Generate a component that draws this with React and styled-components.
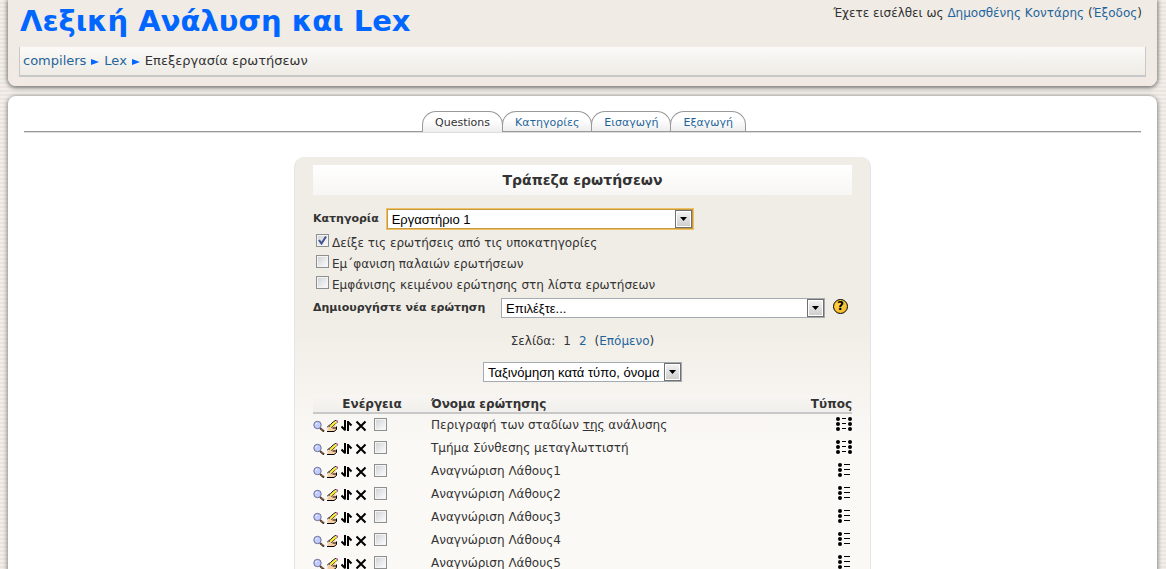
import styled, { createGlobalStyle } from 'styled-components';

const GlobalStyle = createGlobalStyle`
  * { box-sizing: border-box; }

  html { overflow: hidden; }

  body {
    margin: 0;
    background: repeating-linear-gradient(#f3eee9 0 2px, #eae5df 2px 4px);
    color: #333;
    font-family: 'DejaVu Sans', Verdana, sans-serif;
    font-size: 12px;
    line-height: 16px;
  }

  a {
    color: #1f659b;
    text-decoration: none;
  }
`;

const Page = styled.div`
  display: flex;
  flex-direction: column;
  gap: 10px;
  padding: 0 9px 0 8px;
`;

const Header = styled.header`
  padding: 0 11px 9px;
  background: linear-gradient(#f0ebe5 60%, #f2e9e3);
  border-radius: 0 0 8px 8px;
  box-shadow: 0 1px 4px 1px #777;
`;

const HeaderTop = styled.div`
  display: flex;
  justify-content: space-between;
  align-items: flex-start;
  height: 47px;
  padding: 4px 4px 0 1px;
`;

const SiteTitle = styled.h1`
  margin: 0;
  color: #06f;
  font-size: 29px;
  line-height: 34px;
`;

const LoginInfo = styled.div`
  line-height: 18px;
`;

const Breadcrumb = styled.nav`
  display: flex;
  align-items: center;
  gap: 5px;
  height: 30px;
  padding: 0 3px;
  background: linear-gradient(#fbfaf8, #eeebe5);
  border: solid #c8c8c8;
  border-width: 0 1px 2px;
  font-size: 13px;
`;

const ArrowIcon = styled.svg`
  width: 8px;
  height: 8px;
  fill: #06f;
`;

const Content = styled.main`
  padding: 15px 16px 0;
  background: #fff;
  border-radius: 8px 8px 0 0;
  box-shadow: 0 1px 4px 1px #888;
`;

const Tabs = styled.nav`
  display: flex;
  justify-content: center;
  padding-left: 4px;
  border-bottom: 1px solid #999;
  box-shadow: 0 1px #ddd;
`;

const Tab = styled.a`
  height: ${({ $active }) => ($active ? '21px' : '20px')};
  margin-bottom: ${({ $active }) => ($active ? '-1px' : '0')};
  margin-left: -1px;
  padding: 0 12px;
  background: linear-gradient(#fff 40%, #eee);
  border: 1px solid #999;
  border-bottom: 0;
  border-radius: 14px 14px 0 0;
  color: ${({ $active }) => ($active ? '#333' : '#1f659b')};
  font-size: 11px;
  line-height: 22px;
`;

const Bank = styled.section`
  width: 577px;
  margin: 25px auto 0;
  padding: 8px 18px;
  background: linear-gradient(#f0ede6 0 160px, #fbf9f6 290px, #fbf9f5);
  border: solid #e5e5e5;
  border-width: 0 1px;
  border-radius: 10px 10px 0 0;
`;

const BankTitle = styled.h2`
  margin: 0 0 14px;
  background: linear-gradient(#fff, #f7f6f4);
  font-size: 14px;
  line-height: 30px;
  text-align: center;
`;

const Field = styled.div`
  display: flex;
  align-items: center;
  gap: 8px;
`;

const CreateField = styled(Field)`
  margin-top: 3px;
  padding-right: 4px;

  label { flex: 1; }
`;

const FieldLabel = styled.label`
  font-size: 11px;
  font-weight: bold;
  line-height: 18px;
  white-space: nowrap;
`;

const SelectBox = styled.div`
  position: relative;
  display: flex;
  flex: ${({ $width }) => ($width ? `0 0 ${$width}px` : '0 0 auto')};
  outline: ${({ $focus }) => ($focus ? '1px solid #f2c063' : '0')};
`;

const Select = styled.select`
  appearance: none;
  width: 100%;
  height: 20px;
  padding: 0 21px 0 4px;
  background: #fff;
  border: 1px solid ${({ $focus }) => ($focus ? '#c59a45' : '#a5a9b0')};
  border-radius: 0;
  outline: 0;
  color: #000;
  font: 13px 'Liberation Sans', Arial, sans-serif;
`;

const SelectArrow = styled.span`
  position: absolute;
  top: 1px;
  right: 1px;
  display: flex;
  align-items: center;
  justify-content: center;
  width: 17px;
  height: 18px;
  background: linear-gradient(#f4f4f4, #ccc);
  border: 1px solid #707070;
  box-shadow: inset 0 0 0 1px #fff;
  pointer-events: none;
`;

const CheckList = styled.div`
  margin-top: 3px;
  margin-bottom: 2px;
`;

const CheckLabel = styled.label`
  display: flex;
  align-items: center;
  gap: 3px;
  height: 21px;
  padding-left: 3px;

  input { margin-bottom: 4px; }
`;

const Checkbox = styled.input`
  appearance: none;
  width: 13px;
  height: 13px;
  margin: 0;
  background: linear-gradient(135deg, #cdd0d4, #fff);
  border: 1px solid #8e8f8f;
  box-shadow: inset 0 0 0 1px #f4f4f4;

  &:checked {
    background: url("data:image/svg+xml,%3Csvg xmlns='http://www.w3.org/2000/svg' viewBox='0 0 11 11'%3E%3Cpath d='M2 5l2.5 3.500L9 1.500' fill='none' stroke='%23405090' stroke-width='2'/%3E%3C/svg%3E"), linear-gradient(135deg, #cdd0d4, #fff);
  }
`;

const HelpButton = styled.button`
  width: 15px;
  height: 15px;
  margin-bottom: 3px;
  padding: 0;
  background: radial-gradient(circle at 40% 40%, #ffd84a, #f5ae1b);
  border: 1px solid #000;
  border-radius: 50%;
  color: #000;
  font: bold 12px/13px 'DejaVu Sans', sans-serif;
  text-align: center;
`;

const Paging = styled.nav`
  display: flex;
  justify-content: center;
  gap: 8px;
  margin: 15px 0 13px;
`;

const SortRow = styled.div`
  display: flex;
  justify-content: center;
  margin-bottom: 13px;
`;

const Table = styled.table`
  width: 100%;
  border-collapse: collapse;
  table-layout: fixed;
`;

const HeadCell = styled.th`
  width: ${({ $width }) => $width || 'auto'};
  height: 18px;
  padding: 0;
  background: linear-gradient(#f8f6f3, #f1efeb);
  border-bottom: 2px solid #c8c8c8;
  text-align: ${({ $align }) => $align || 'left'};
`;

const Cell = styled.td`
  height: 23px;
  padding: 0;
`;

const Actions = styled.div`
  display: flex;
  align-items: center;
  gap: 2px;

  input { margin: 0 0 1px 5px; }
`;

const IconButton = styled.button`
  display: flex;
  padding: 2px 0 0;
  background: none;
  border: 0;
`;

const TypeIcon = styled.svg`
  display: block;
  width: 16px;
  height: 16px;
  margin: 0 0 2px auto;
`;

const tabs = ['Questions', 'Κατηγορίες', 'Εισαγωγή', 'Εξαγωγή'];

const questions = [
  { id: 1, name: <>Περιγραφή των σταδίων <u>της</u> ανάλυσης</>, type: 'match' },
  { id: 2, name: 'Τμήμα Σύνθεσης μεταγλωττιστή', type: 'match' },
  { id: 3, name: 'Αναγνώριση Λάθους1', type: 'choice' },
  { id: 4, name: 'Αναγνώριση Λάθους2', type: 'choice' },
  { id: 5, name: 'Αναγνώριση Λάθους3', type: 'choice' },
  { id: 6, name: 'Αναγνώριση Λάθους4', type: 'choice' },
  { id: 7, name: 'Αναγνώριση Λάθους5', type: 'choice' },
];

const Arrow = () => (
  <ArrowIcon viewBox="0 0 8 8"><path d="M0 2l8 3-8 3z" /></ArrowIcon>
);

const PreviewIcon = () => (
  <svg width="12" height="12" viewBox="0 0 12 12">
    <path d="M7 8l4 3.500" stroke="#321" strokeWidth="2" />
    <path d="M8 8.500l2 2" stroke="#c98" strokeWidth="1" />
    <circle cx="4.500" cy="5" r="3.700" fill="#c3ccff" stroke="#6a6f96" />
    <path d="M2.500 4.500L4 3" stroke="#fff" />
  </svg>
);

const EditIcon = () => (
  <svg width="12" height="12" viewBox="0 0 12 12">
    <path d="M0.500 8.500L3 5.500l3-1.500 3 1-1.500 1.500H10v3L8 11H0.500z" fill="#f6cfa4" />
    <path d="M0 7.500L3 4.500M5.500 8h4M0 11.500h7l2.500-2V6.500" fill="none" stroke="#000" />
    <path d="M2.500 6.500L5 3l4-3M4 7.500L8 4l3-2.500" fill="none" stroke="#000" />
    <path d="M3.500 6.500l6-5" stroke="#fe3" strokeWidth="2" />
    <path d="M9.500 1.500l1-1" stroke="#b5a" strokeWidth="2" />
  </svg>
);

const MoveIcon = () => (
  <svg width="12" height="12" viewBox="0 0 12 12" fill="none" stroke="#000" strokeWidth="2">
    <path d="M4 0v10.500M7 11V1" />
    <path d="M0.500 6.500L4 10M7 2l3.500 3.500" />
  </svg>
);

const DeleteIcon = () => (
  <svg width="12" height="12" viewBox="0 0 12 12">
    <path d="M1.500 1.500l9 9M10.500 1.500l-9 9" stroke="#000" strokeWidth="2" />
  </svg>
);

const actions = [
  { label: 'Προεπισκόπηση', Icon: PreviewIcon },
  { label: 'Επεξεργασία', Icon: EditIcon },
  { label: 'Μετακίνηση', Icon: MoveIcon },
  { label: 'Διαγραφή', Icon: DeleteIcon },
];

const QuestionType = ({ type }) => (
  <TypeIcon viewBox="0 0 16 16">
    {[3, 8, 13].map((y) => (
      <g key={y}>
        <circle cx={type === 'match' ? 2 : 4} cy={y} r="2" />
        <path d={type === 'match' ? `M6 ${y - 0.5}h4` : `M8 ${y - 0.5}h6`} stroke="#000" />
        {type === 'match' && <circle cx="14" cy={y} r="2" />}
      </g>
    ))}
  </TypeIcon>
);

const Dropdown = ({ id, value, width, focus, label }) => (
  <SelectBox $width={width} $focus={focus}>
    <Select id={id} $focus={focus} aria-label={label}>
      <option>{value}</option>
    </Select>
    <SelectArrow>
      <svg width="7" height="4" viewBox="0 0 7 4"><path d="M0 0h7L3.500 4z" /></svg>
    </SelectArrow>
  </SelectBox>
);

const Question = ({ name, type }) => (
  <tr>
    <Cell>
      <Actions>
        {actions.map(({ label, Icon }) => (
          <IconButton key={label} aria-label={label}><Icon /></IconButton>
        ))}
        <Checkbox type="checkbox" aria-label="Επιλογή" />
      </Actions>
    </Cell>
    <Cell>{name}</Cell>
    <Cell><QuestionType type={type} /></Cell>
  </tr>
);

const App = () => (
  <>
    <GlobalStyle />
    <Page>
      <Header>
        <HeaderTop>
          <SiteTitle>Λεξική Ανάλυση και Lex</SiteTitle>
          <LoginInfo>
            Έχετε εισέλθει ως <a href="#user">Δημοσθένης Κοντάρης</a> (<a href="#logout">Έξοδος</a>)
          </LoginInfo>
        </HeaderTop>
        <Breadcrumb>
          <a href="#compilers">compilers</a>
          <Arrow />
          <a href="#lex">Lex</a>
          <Arrow />
          <span>Επεξεργασία ερωτήσεων</span>
        </Breadcrumb>
      </Header>
      <Content>
        <Tabs>
          {tabs.map((tab, index) => (
            <Tab key={tab} href="#tab" $active={index === 0}>{tab}</Tab>
          ))}
        </Tabs>
        <Bank>
          <BankTitle>Τράπεζα ερωτήσεων</BankTitle>
          <Field>
            <FieldLabel htmlFor="category">Κατηγορία</FieldLabel>
            <Dropdown id="category" value="Εργαστήριο 1" width={306} focus />
          </Field>
          <CheckList>
            <CheckLabel><Checkbox type="checkbox" defaultChecked />Δείξε τις ερωτήσεις από τις υποκατηγορίες</CheckLabel>
            <CheckLabel><Checkbox type="checkbox" />Εμ΄φανιση παλαιών ερωτήσεων</CheckLabel>
            <CheckLabel><Checkbox type="checkbox" />Εμφάνισης κειμένου ερώτησης στη λίστα ερωτήσεων</CheckLabel>
          </CheckList>
          <CreateField>
            <FieldLabel htmlFor="create">Δημιουργήστε νέα ερώτηση</FieldLabel>
            <Dropdown id="create" value="Επιλέξτε..." width={324} />
            <HelpButton aria-label="Βοήθεια">?</HelpButton>
          </CreateField>
          <Paging>
            <span>Σελίδα:</span>
            <span>1</span>
            <a href="#2">2</a>
            <span>(<a href="#next">Επόμενο</a>)</span>
          </Paging>
          <SortRow>
            <Dropdown value="Ταξινόμηση κατά τύπο, όνομα" label="Ταξινόμηση" />
          </SortRow>
          <Table>
            <thead>
              <tr>
                <HeadCell $width="118px" $align="center">Ενέργεια</HeadCell>
                <HeadCell>Όνομα ερώτησης</HeadCell>
                <HeadCell $width="60px" $align="right">Τύπος</HeadCell>
              </tr>
            </thead>
            <tbody>
              {questions.map((question) => <Question key={question.id} {...question} />)}
            </tbody>
          </Table>
        </Bank>
      </Content>
    </Page>
  </>
);

export default App;
